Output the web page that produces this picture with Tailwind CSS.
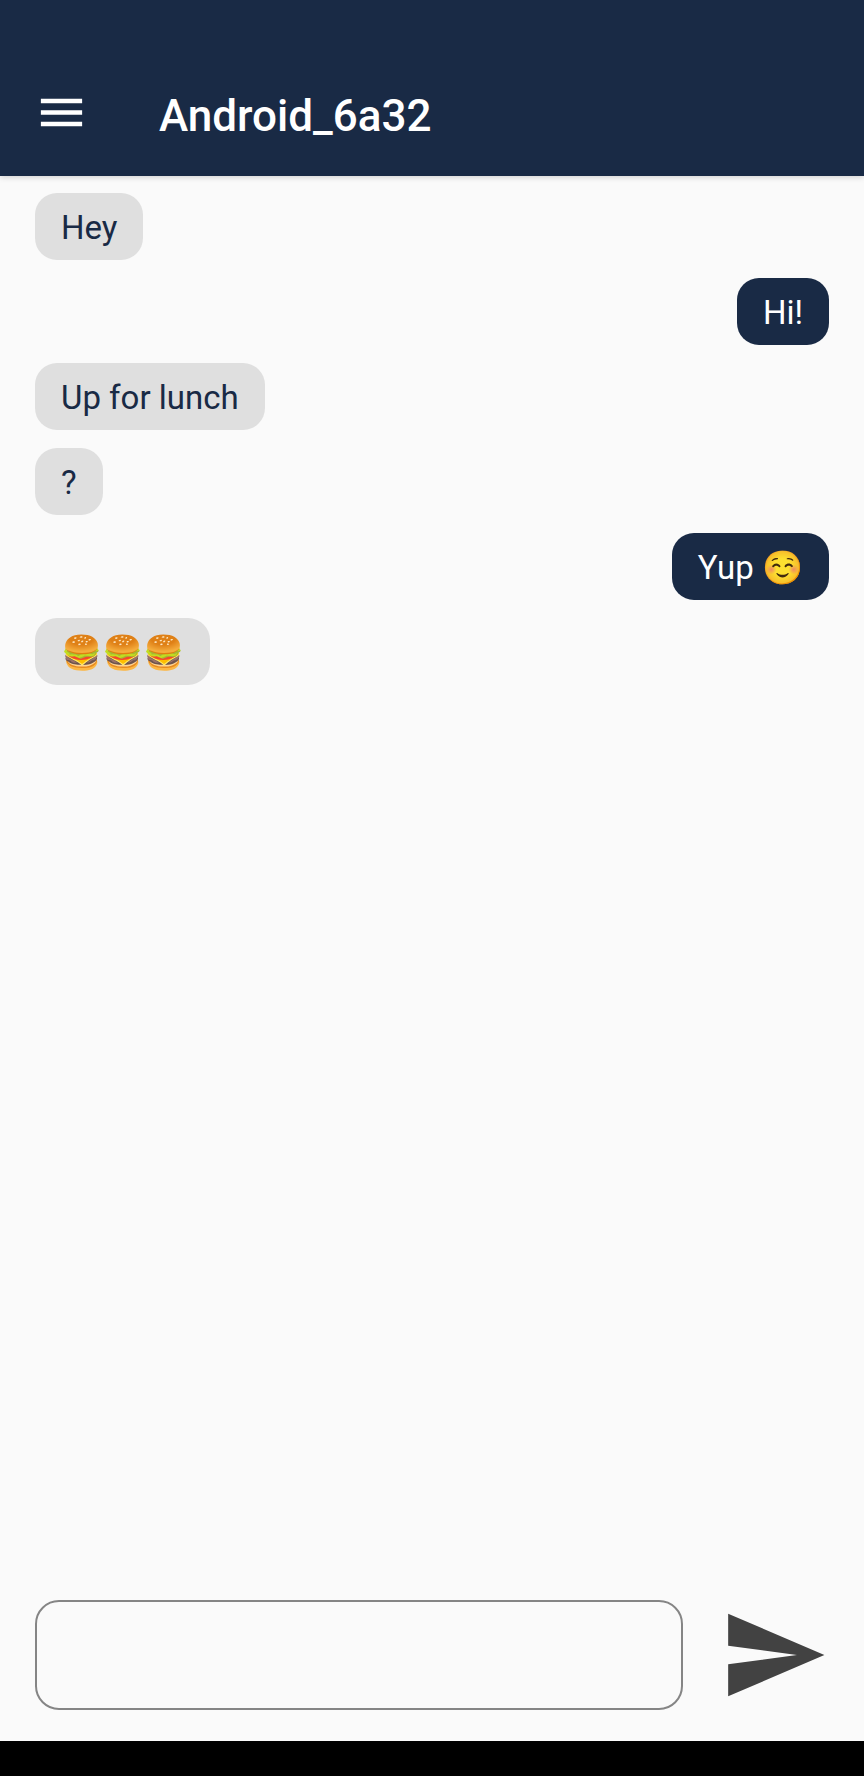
<!DOCTYPE html>
<html lang="en">
<head>
<meta charset="utf-8">
<meta name="viewport" content="width=device-width, initial-scale=1">
<title>Android_6a32</title>
<script src="https://cdn.jsdelivr.net/npm/@tailwindcss/browser@4"></script>
</head>
<body class="flex min-h-screen flex-col bg-[#fafafa] font-[Roboto,'Noto_Color_Emoji',sans-serif]">
<header class="flex items-center gap-[70px] bg-[#192a45] px-[34px] pt-20 pb-6 text-white shadow-[0_1px_6px_rgba(0,0,0,0.18)]">
  <button type="button" aria-label="Open menu" class="-mt-2 block">
    <svg class="size-[55px]" viewBox="0 0 24 24" fill="currentColor" aria-hidden="true"><path d="M3 18h18v-2H3v2zm0-5h18v-2H3v2zm0-7v2h18V6H3z"/></svg>
  </button>
  <h1 class="text-[44px] leading-[72px] font-medium">Android_6a32</h1>
</header>
<main class="flex-1 px-[35px] pt-[17px]">
  <ul class="flex flex-col items-start gap-[18px] text-[33px] leading-[65px] text-[#192a45]">
    <li class="rounded-[22px] bg-[#dfdfdf] px-[26px] pt-[2px]">Hey</li>
    <li class="self-end rounded-[22px] bg-[#192a45] px-[26px] pt-[2px] text-white">Hi!</li>
    <li class="rounded-[22px] bg-[#dfdfdf] px-[26px] pt-[2px]">Up for lunch</li>
    <li class="rounded-[22px] bg-[#dfdfdf] px-[26px] pt-[2px]">?</li>
    <li class="self-end rounded-[22px] bg-[#192a45] px-[26px] pt-[2px] text-white">Yup ☺️</li>
    <li class="rounded-[22px] bg-[#dfdfdf] px-[26px] pt-[2px]">🍔🍔🍔</li>
  </ul>
</main>
<form class="flex items-center gap-9 px-[35px] pb-[31px]">
  <input type="text" aria-label="Message" class="h-[110px] min-w-0 flex-1 rounded-3xl border-2 border-[#858585] px-6 text-[33px] text-[#192a45] outline-none">
  <button type="submit" aria-label="Send" class="block shrink-0">
    <svg class="size-[110px]" viewBox="0 0 24 24" fill="#424242" aria-hidden="true"><path d="M2 3v7l15 2-15 2v7l21-9z"/></svg>
  </button>
</form>
<div class="h-[35px] bg-black"></div>
</body>
</html>
